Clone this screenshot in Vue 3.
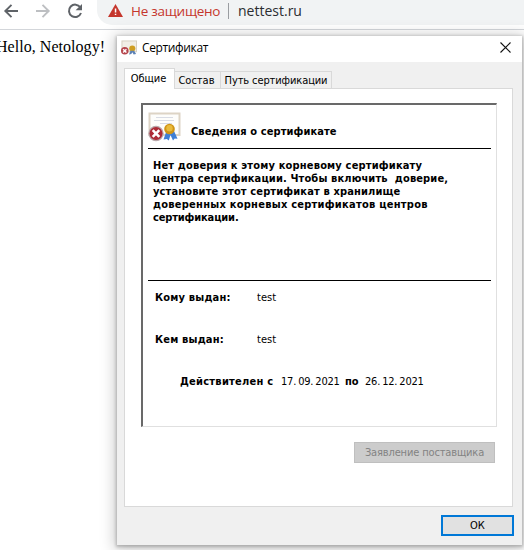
<script setup>
const tabs = [
  { label: 'Общие', kind: 'general' },
  { label: 'Состав', kind: 'details' },
  { label: 'Путь сертификации', kind: 'path' },
]
const message = [
  'Нет доверия к этому корневому сертификату',
  'центра сертификации. Чтобы включить  доверие,',
  'установите этот сертификат в хранилище',
  'доверенных корневых сертификатов центров',
  'сертификации.',
]
</script>

<template>
  <div class="browser">
    <header class="toolbar">
      <svg class="nav" width="97" height="28" viewBox="0 0 97 28" fill="none">
        <path d="M18 11H5.5M11.5 4.8 5.3 11l6.2 6.2" stroke="#5f6368" stroke-width="1.9" />
        <path d="M36 11h12.5M42.5 4.8 48.7 11l-6.2 6.2" stroke="#bdbfc2" stroke-width="1.9" />
        <path d="M80.3 7.3A6.2 6.2 0 1 0 81 13" stroke="#5f6368" stroke-width="2" />
        <path d="M82 4v6.2h-6.4z" fill="#5f6368" />
      </svg>
      <div class="omnibox">
        <svg class="warn" width="15" height="13" viewBox="0 0 15 13">
          <path d="M7.5 0 15 13H0z" fill="#c5362c" />
          <path d="M6.8 4.5h1.5v4H6.8zM6.8 9.7h1.5v1.4H6.8z" fill="#fff" />
        </svg>
        <span class="unsafe">Не защищено</span>
        <i class="sep"></i>
        <span class="url">nettest.ru</span>
      </div>
    </header>
    <p class="hello">Hello, Netology!</p>

    <section class="dialog">
      <div class="titlebar">
        <svg class="small-icon" width="16" height="16" viewBox="0 0 34 32">
          <rect x="2" y="1" width="31" height="23" fill="#f1eee6" stroke="#d5cebf" stroke-width="2" />
          <circle cx="24" cy="17" r="6.5" fill="#cf9e22" />
          <path d="m20 22-3 8 5-1 2-4 3 5 5-1-4-7z" fill="#5d82b5" />
          <circle cx="8" cy="22" r="8" fill="#b5444c" />
          <path d="m4.500 18.500 7 7m0-7-7 7" stroke="#fff" stroke-width="3" />
        </svg>
        <span class="title">Сертификат</span>
        <svg class="close" width="11" height="11" viewBox="0 0 11 11">
          <path d="m.5.5 10 10m0-10-10 10" stroke="#111" stroke-width="1.1" />
        </svg>
      </div>

      <nav class="tabs">
        <div v-for="t in tabs" :key="t.kind" class="tab" :class="t.kind"><span>{{ t.label }}</span></div>
      </nav>

      <div class="page">
        <div class="panel">
          <div class="heading">
            <svg class="cert" width="33" height="30" viewBox="0 0 33 30">
              <rect x="1.5" y="1.500" width="30" height="21.500" fill="#fdfdfb" stroke="#ddd4c5" stroke-width="2" />
              <path d="M8 5.500h17M6 8.500h20M12 11.500h12" stroke="#d9dce4" />
              <path d="m18.500 19-3 8.500 3.300-.6 2 1.600 1.700-5.500 2.500 5.500 1.700-2 2.800.3-3.500-7.800z" fill="#3f7fd6" />
              <circle cx="21.500" cy="17" r="5.300" fill="#cf9416" />
              <circle cx="21.500" cy="16.300" r="3.200" fill="#e9bb3c" />
              <circle cx="8" cy="21.500" r="7.700" fill="#b9a7aa" />
              <circle cx="8" cy="21.500" r="6.500" fill="#ad2a36" />
              <path d="m4.700 18.200 6.600 6.600m0-6.600-6.600 6.600" stroke="#fff" stroke-width="2.600" />
            </svg>
            <strong class="info">Сведения о сертификате</strong>
          </div>
          <div class="message">
            <div v-for="(line, i) in message" :key="i" class="line" :class="'l' + i">{{ line }}</div>
          </div>
          <div class="field">
            <strong class="to">Кому выдан:</strong><span class="val">test</span>
          </div>
          <div class="field">
            <strong class="by">Кем выдан:</strong><span class="val">test</span>
          </div>
          <div class="validity">
            <strong class="from">Действителен с</strong>
            <span class="date">17.<b></b>09.<b></b>2021</span>
            <strong class="until">по</strong>
            <span class="date">26.<b></b>12.<b></b>2021</span>
          </div>
        </div>
        <button class="issuer" disabled>Заявление поставщика</button>
      </div>
      <button class="ok">ОК</button>
    </section>
  </div>
</template>

<style>
body { overflow: hidden; background: #fff; }
</style>

<style scoped>
* { box-sizing: border-box; }
.browser {
  width: 524px; height: 550px; overflow: hidden; position: relative;
  background: #fff; color: #000;
  font: 11px/13px "DejaVu Sans Condensed", "DejaVu Sans", sans-serif;
  font-stretch: condensed;
  white-space: pre;
}
.toolbar { height: 30px; display: flex; border-bottom: 1px solid #d3d6da; }
.nav { flex: none; }
.omnibox {
  flex: 1; height: 25px; background: #f1f3f4; border-bottom-left-radius: 15px;
  display: flex; align-items: flex-start; padding: 0 0 0 11px;
  font: 14px/22px "Open Sans", "Noto Sans", sans-serif;
}
.warn { margin-top: 4px; flex: none; }
.unsafe { margin-left: 8px; width: 89px; color: #c5362c; font-size: 13.5px; letter-spacing: -.27px; }
.sep { width: 1px; height: 16px; margin: 3px 9px 0 8px; background: #9a9da1; }
.url { color: #2b2d31; }
.hello { margin: 8px 0 0 -4px; font: 16px/18px "Liberation Serif", serif; letter-spacing: .04px; }

.dialog {
  position: absolute; left: 117px; top: 36px; width: 405px; height: 509px;
  background: #f0f0f0; box-shadow: 0 1px 3px 1px rgba(0,0,0,.22), 0 2px 14px 3px rgba(0,0,0,.2);
}
.titlebar { height: 26px; background: #fff; display: flex; align-items: center; padding: 0 11px 3px 4px; }
.title { margin-left: 5px; font: 12px/16px "Open Sans", "Noto Sans", sans-serif; letter-spacing: -.36px; }
.close { margin-left: auto; }
.tabs { height: 26px; padding: 6px 0 0 7px; display: flex; align-items: flex-end; }
.tab {
  height: 17px; border: 1px solid #d9d9d9; border-left: 0; border-bottom: 0;
  background: #f0f0f0; padding-top: 2px; text-align: center;
}
.tab.general {
  width: 51px; height: 21px; background: #fff; border-left: 1px solid #d9d9d9;
  margin-bottom: -1px; padding: 3px 2px 0 0; position: relative; z-index: 1;
}
.tab.details { width: 46px; padding-right: 2px; }
.tab.path { width: 111px; letter-spacing: -.1px; }
.page { margin: 0 9px 0 7px; height: 419px; background: #fff; border: 1px solid #d9d9d9; padding: 14px 15px 0 16px; }
.panel {
  height: 324px; border: 2px solid #696969; border-right: 1px solid #e0e0e0; border-bottom: 1px solid #e0e0e0;
  padding: 0 5px;
}
.heading { height: 44px; border-bottom: 1px solid #000; display: flex; padding-top: 7px; }
.cert { flex: none; }
.info { margin: 13px 0 0 10px; letter-spacing: .09px; }
.message { height: 132px; border-bottom: 1px solid #000; padding: 10px 0 0 5px; font-weight: bold; }
.l0 { letter-spacing: .17px; }
.l1 { letter-spacing: .13px; }
.l2 { letter-spacing: .14px; }
.l3 { letter-spacing: .25px; }
.l4 { letter-spacing: -.15px; }
.field { height: 42px; padding: 10px 0 0 7px; display: flex; }
.field strong { width: 102px; letter-spacing: .19px; }
.validity { display: flex; padding: 10px 0 0 32px; }
.from { width: 101px; letter-spacing: .26px; }
.date { width: 64px; letter-spacing: -.2px; }
.date b { display: inline-block; width: 2px; }
.until { width: 20px; }
button { font: inherit; padding: 0; display: block; }
.issuer { width: 141px; height: 21px; margin: 15px 2px 0 auto; background: #ccc; border: 1px solid #bfbfbf; color: #838383; letter-spacing: -.15px; }
.ok { width: 73px; height: 21px; margin: 8px 8px 0 auto; background: #e1e1e1; border: 2px solid #0078d7; color: #000; }
</style>
